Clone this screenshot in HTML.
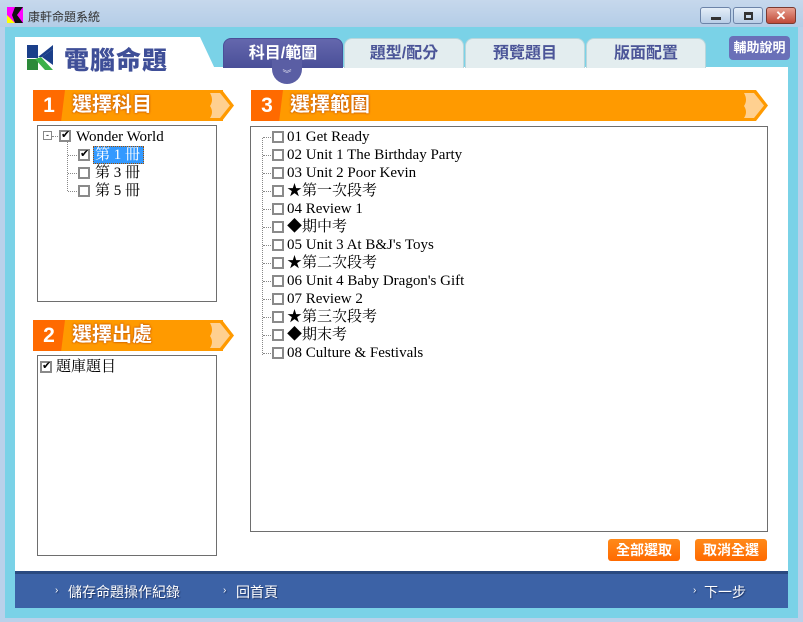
<!DOCTYPE html>
<html><head><meta charset="utf-8"><style>
*{margin:0;padding:0;box-sizing:border-box}
body{width:803px;height:622px;overflow:hidden;background:#b9d1ea;font-family:"Liberation Sans","Noto Sans CJK TC",sans-serif;position:relative}
.abs{position:absolute}
#title{left:0;top:0;width:803px;height:27px;background:linear-gradient(#c6d8ec,#b4cde7)}
#frame{left:5px;top:27px;width:793px;height:591px;background:#7ad2e7}
#white{left:15px;top:67px;width:773px;height:504px;background:#fff}
.tab{top:38px;height:30px;border-radius:8px 8px 0 0;background:#e3edef;color:#4b5598;font-size:16px;font-weight:bold;text-align:center;line-height:30px;border:1px solid #b8d6dc;border-bottom:none}
.hdr{height:31px;background:#ff9a00;color:#fff;font-size:20px;font-weight:bold;line-height:31px}
.hdr .n{position:absolute;left:0;top:0;width:32px;height:31px;background:#ff6a00;text-align:center;font-size:21px;clip-path:polygon(0 0,100% 0,88% 100%,0 100%)}
.hdr .t{position:absolute;left:39px;top:0;text-shadow:0 0 2px #c85a00,0 0 2px #c85a00}
.box{border:1px solid #6e6e6e;background:#fff}
.row{position:absolute;height:18px;font-family:"Liberation Serif","Noto Serif CJK TC",serif;font-size:15px;line-height:18px;color:#000;white-space:nowrap}
.cb{position:absolute;width:12px;height:12px;border:2px solid #8a8a8a;background:#fff}
.dot{position:absolute;border-top:1px dotted #888;width:9px;height:0}
.btn{top:539px;height:22px;width:72px;background:linear-gradient(#ff8a1a,#ff6a00);border-radius:3px;color:#fff;font-size:14px;font-weight:bold;text-align:center;line-height:22px}
.ft{color:#fff;font-size:14px;top:582px;text-shadow:1px 1px 1px #1f3566}
</style></head><body>
<div id="title" class="abs"></div>
<svg class="abs" style="left:7px;top:7px" width="16" height="16"><rect width="16" height="16" fill="#ff00ff"/><polygon points="0,8 8,16 0,16" fill="#ffff00"/><polygon points="8,0 16,0 10,8 16,16 8,16 5,8" fill="#111"/></svg>
<div class="abs" style="left:28px;top:8px;font-size:12px;color:#333">康軒命題系統</div>
<div class="abs" style="left:700px;top:7px;width:31px;height:17px;border:1px solid #6c84a8;border-radius:3px;background:linear-gradient(#e4eef8,#b8cde6)"><div class="abs" style="left:10px;top:9px;width:10px;height:3px;background:#333"></div></div>
<div class="abs" style="left:733px;top:7px;width:30px;height:17px;border:1px solid #6c84a8;border-radius:3px;background:linear-gradient(#e4eef8,#b8cde6)"><div class="abs" style="left:10px;top:4px;width:9px;height:8px;border:2px solid #333;border-top-width:3px"></div></div>
<div class="abs" style="left:766px;top:7px;width:30px;height:17px;border:1px solid #7a3a30;border-radius:3px;background:linear-gradient(#e8a090,#c04a38);color:#fff;font-size:13px;font-weight:bold;text-align:center;line-height:15px">✕</div>
<div id="frame" class="abs"></div>
<div class="abs" style="left:15px;top:37px;width:200px;height:32px;background:#fff;clip-path:polygon(0 0,185px 0,200px 100%,0 100%)"></div>
<div id="white" class="abs"></div>
<svg class="abs" style="left:27px;top:45px" width="26" height="25"><rect width="26" height="25" fill="#fff"/><rect x="0" y="0" width="11" height="13" fill="#1b3f8a"/><polygon points="11,12 26,0 26,4 15,12" fill="#1b3f8a"/><polygon points="0,14 11,14 11,25 0,25" fill="#2c8a3a"/><polygon points="14,12 26,25 18,25 8,14" fill="#3bb04a"/><polygon points="15,12 26,4 26,20" fill="#1b3f8a"/></svg>
<div class="abs" style="left:64px;top:41px;font-size:25px;font-weight:900;color:#3f4f98;letter-spacing:1px">電腦命題</div>
<div class="abs tab" style="left:223px;width:120px;background:linear-gradient(#6467ad,#4a4f98);color:#fff;border-color:#4a4f98">科目/範圍</div>
<div class="abs" style="left:272px;top:60px;width:30px;height:24px;border-radius:0 0 15px 15px;background:#5a5ea4;color:#dde;font-size:9px;text-align:center;line-height:28px">︾</div>
<div class="abs tab" style="left:344px;width:120px">題型/配分</div>
<div class="abs tab" style="left:465px;width:120px">預覽題目</div>
<div class="abs tab" style="left:586px;width:120px">版面配置</div>
<div class="abs" style="left:729px;top:36px;width:61px;height:24px;border-radius:4px;background:#6a70b8;color:#fff;font-size:13px;font-weight:bold;text-align:center;line-height:24px">輔助說明</div>

<div class="abs hdr" style="left:33px;top:90px;width:190px"><div class="n">1</div><div class="t">選擇科目</div></div>
<svg class="abs" style="left:206px;top:90px" width="28" height="31"><polygon points="0,0 16,0 28,15.5 16,31 0,31" fill="#ff9a00"/><path d="M4,3 L14,3 L24,15.5 L14,28 L4,28 Q8,22 4,16 Q8,10 4,3Z" fill="#ffd090"/></svg>
<div class="abs hdr" style="left:33px;top:320px;width:190px"><div class="n">2</div><div class="t">選擇出處</div></div>
<svg class="abs" style="left:206px;top:320px" width="28" height="31"><polygon points="0,0 16,0 28,15.5 16,31 0,31" fill="#ff9a00"/><path d="M4,3 L14,3 L24,15.5 L14,28 L4,28 Q8,22 4,16 Q8,10 4,3Z" fill="#ffd090"/></svg>
<div class="abs hdr" style="left:251px;top:90px;width:500px"><div class="n">3</div><div class="t">選擇範圍</div></div>
<svg class="abs" style="left:740px;top:90px" width="28" height="31"><polygon points="0,0 16,0 28,15.5 16,31 0,31" fill="#ff9a00"/><path d="M4,3 L14,3 L24,15.5 L14,28 L4,28 Q8,22 4,16 Q8,10 4,3Z" fill="#ffd090"/></svg>

<div class="abs box" style="left:37px;top:125px;width:180px;height:177px"></div>
<div class="abs" style="left:43px;top:131px;width:9px;height:9px;border:1px solid #888;font-size:9px;line-height:6px;text-align:center;background:#fff">-</div>
<div class="dot" style="left:52px;top:136px;width:6px"></div>
<div class="cb" style="left:59px;top:130px"></div><div class="abs" style="left:61px;top:128px;font-size:11px">✔</div>
<div class="row" style="left:76px;top:128px">Wonder World</div>
<div class="abs" style="left:67px;top:142px;height:49px;border-left:1px dotted #888"></div>
<div class="dot" style="left:68px;top:155px"></div><div class="dot" style="left:68px;top:173px"></div><div class="dot" style="left:68px;top:191px"></div>
<div class="cb" style="left:78px;top:149px"></div><div class="abs" style="left:80px;top:147px;font-size:11px">✔</div>
<div class="abs" style="left:93px;top:146px;width:51px;height:18px;background:#3399ff;border:1px dotted #a05000"></div>
<div class="row" style="left:95px;top:146px;color:#fff">第 1 冊</div>
<div class="cb" style="left:78px;top:167px"></div><div class="row" style="left:95px;top:164px">第 3 冊</div>
<div class="cb" style="left:78px;top:185px"></div><div class="row" style="left:95px;top:182px">第 5 冊</div>

<div class="abs box" style="left:37px;top:355px;width:180px;height:201px"></div>
<div class="cb" style="left:40px;top:361px"></div><div class="abs" style="left:42px;top:359px;font-size:11px">✔</div>
<div class="row" style="left:56px;top:358px">題庫題目</div>

<div class="abs box" style="left:250px;top:126px;width:518px;height:406px"></div>
<div class="abs" style="left:262px;top:138px;height:217px;border-left:1px dotted #888"></div>
<div id="list"></div>
<script>
var items=["01 Get Ready","02 Unit 1 The Birthday Party","03 Unit 2 Poor Kevin","★第一次段考","04 Review 1","◆期中考","05 Unit 3 At B&J's Toys","★第二次段考","06 Unit 4 Baby Dragon's Gift","07 Review 2","★第三次段考","◆期末考","08 Culture & Festivals"];
var h="";items.forEach(function(t,i){var y=128+i*18;h+='<div class="dot" style="left:263px;top:'+(y+9)+'px;width:8px"></div><div class="cb" style="left:272px;top:'+(y+3)+'px"></div><div class="row" style="left:287px;top:'+y+'px">'+t.replace(/&/g,"&amp;")+'</div>';});
document.getElementById("list").innerHTML=h;
</script>
<div class="abs btn" style="left:608px">全部選取</div>
<div class="abs btn" style="left:695px">取消全選</div>

<div class="abs" style="left:15px;top:571px;width:773px;height:37px;background:#3c62a6;border-top:3px solid #2a4a80"></div>
<div class="abs ft" style="left:55px;font-size:10px;top:585px">›</div><div class="abs ft" style="left:68px">儲存命題操作紀錄</div>
<div class="abs ft" style="left:223px;font-size:10px;top:585px">›</div><div class="abs ft" style="left:236px">回首頁</div>
<div class="abs ft" style="left:693px;font-size:10px;top:585px">›</div><div class="abs ft" style="left:704px">下一步</div>
</body></html>
